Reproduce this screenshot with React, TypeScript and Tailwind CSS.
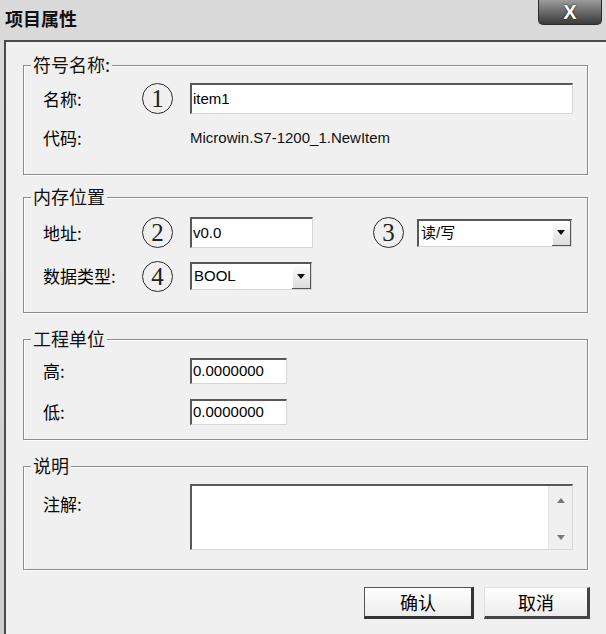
import type { ReactNode } from 'react';

const sunken =
  'bg-white border-t-2 border-l-2 border-r border-b border-t-[#585858] border-l-[#585858] border-r-[#d6d6d6] border-b-[#d6d6d6]';

const Marker = ({ n }: { n: string }) => (
  <span className="inline-flex w-[31px] h-[31px] shrink-0 items-center justify-center rounded-full border border-[#2a2a2a] font-['Liberation_Serif',serif] text-[25px] leading-none text-[#222]">
    {n}
  </span>
);

const Group = ({
  title,
  className,
  children
}: {
  title: string;
  className: string;
  children: ReactNode;
}) => (
  <section
    className={`relative w-[565px] border border-[#8c8c8c] shadow-[1px_1px_0_#ffffff,inset_1px_1px_0_#ffffff] pl-[19px] ${className}`}
  >
    <span className="absolute top-[-12px] left-[7px] bg-[#f0f0f0] px-[2px] text-[18px] leading-[20px] text-[#111]">
      {title}
    </span>
    {children}
  </section>
);

const DownArrow = ({ color = '#111' }: { color?: string }) => (
  <svg width="8" height="5" viewBox="0 0 8 5">
    <polygon points="0,0 8,0 4,5" fill={color} />
  </svg>
);

const UpArrow = ({ color = '#777' }: { color?: string }) => (
  <svg width="8" height="5" viewBox="0 0 8 5">
    <polygon points="0,5 8,5 4,0" fill={color} />
  </svg>
);

const Combo = ({ value, width }: { value: string; width: string }) => (
  <div className={`flex h-[28px] ${width} ${sunken}`}>
    <span className="flex-1 flex items-center pl-[2px] font-['Liberation_Sans','Noto_Sans_CJK_SC',sans-serif] text-[15px]">
      {value}
    </span>
    <span className="w-[19px] flex items-center justify-center bg-gradient-to-b from-white to-[#dcdcdc] border-r border-b border-[#555] shadow-[inset_1px_1px_0_#ffffff]">
      <DownArrow />
    </span>
  </div>
);

export default function App() {
  return (
    <div className="w-[606px] h-[634px] flex flex-col overflow-hidden bg-gradient-to-b from-[#dadada] to-[#cecece] font-['Noto_Sans_CJK_SC',sans-serif] text-black">
      <header className="h-[40px] flex items-start justify-between pl-[5px] pr-[4px]">
        <h1 className="mt-[7px] text-[18px] font-bold leading-[22px] text-[#111]">
          项目属性
        </h1>
        <button className="w-[64px] h-[25px] rounded-b-[5px] border border-t-0 border-[#2b2b2b] bg-gradient-to-b from-[#9c9c9c] via-[#6a6a6a] to-[#3a3a3a] font-['Liberation_Sans',sans-serif] text-[20px] font-black leading-none text-white [text-shadow:0_0_2px_#000]">
          X
        </button>
      </header>

      <main className="flex-1 ml-[4px] border-l-2 border-t-2 border-[#4a4a4a] bg-[#f0f0f0] pl-[17px] pt-[23px] text-[17px]">
        <Group title="符号名称:" className="h-[110px] pt-[17px]">
          <div className="flex items-center h-[31px]">
            <span className="w-[99px]">名称:</span>
            <Marker n="1" />
            <div
              className={`ml-[17px] w-[383px] h-[31px] flex items-center pl-[1px] font-['Liberation_Sans',sans-serif] text-[15px] ${sunken}`}
            >
              item1
            </div>
          </div>
          <div className="flex items-center h-[24px] mt-[12px]">
            <span className="w-[147px]">代码:</span>
            <span className="font-['Liberation_Sans',sans-serif] text-[15px] text-[#111]">
              Microwin.S7-1200_1.NewItem
            </span>
          </div>
        </Group>

        <Group title="内存位置" className="mt-[22px] h-[116px] pt-[19px]">
          <div className="flex items-center h-[31px]">
            <span className="w-[99px]">地址:</span>
            <Marker n="2" />
            <div
              className={`ml-[17px] w-[123px] h-[31px] flex items-center pl-[1px] font-['Liberation_Sans',sans-serif] text-[15px] ${sunken}`}
            >
              v0.0
            </div>
            <span className="ml-[60px]">
              <Marker n="3" />
            </span>
            <span className="ml-[13px]">
              <Combo value="读/写" width="w-[155px]" />
            </span>
          </div>
          <div className="flex items-center h-[28px] mt-[14px]">
            <span className="w-[99px]">数据类型:</span>
            <Marker n="4" />
            <span className="ml-[17px]">
              <Combo value="BOOL" width="w-[122px]" />
            </span>
          </div>
        </Group>

        <Group title="工程单位" className="mt-[26px] h-[101px] pt-[18px]">
          {['高:', '低:'].map((label, i) => (
            <div
              key={label}
              className={`flex items-center h-[26px] ${i === 1 ? 'mt-[15px]' : ''}`}
            >
              <span className="w-[147px]">{label}</span>
              <div
                className={`w-[97px] h-[26px] flex items-center pl-[1px] font-['Liberation_Sans',sans-serif] text-[15px] ${sunken}`}
              >
                0.0000000
              </div>
            </div>
          ))}
        </Group>

        <Group title="说明" className="mt-[26px] h-[104px] pt-[17px]">
          <div className="flex items-start">
            <span className="w-[147px] mt-[8px] leading-[24px]">注解:</span>
            <div className={`w-[383px] h-[66px] flex justify-end ${sunken}`}>
              <div className="w-[24px] bg-[#f0f0f0] border-l border-[#e4e4e4] flex flex-col items-center justify-between pt-[12px] pb-[9px]">
                <UpArrow />
                <DownArrow color="#777" />
              </div>
            </div>
          </div>
        </Group>

        <div className="w-[567px] mt-[17px] flex justify-end gap-[10px]">
          <button className="w-[110px] h-[32px] bg-gradient-to-b from-white to-[#ececec] border border-[#555] border-r-[3px] border-b-[3px] border-r-[#333] border-b-[#333] text-[18px] leading-none">
            确认
          </button>
          <button className="w-[106px] h-[32px] bg-gradient-to-b from-white to-[#ececec] border border-[#e0e0e0] border-r-[3px] border-b-[3px] border-r-[#444] border-b-[#444] text-[18px] leading-none">
            取消
          </button>
        </div>
      </main>
    </div>
  );
}
